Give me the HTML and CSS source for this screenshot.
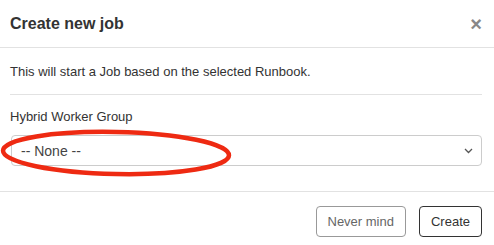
FILE: index.html
```html
<!DOCTYPE html>
<html lang="en">
<head>
    <meta charset="UTF-8">
    <meta name="viewport" content="width=device-width, initial-scale=1.0">
    <title>Create new job</title>
    <link rel="stylesheet" href="styles.css">
</head>
<body>
    <div class="modal">
        <div class="modal-header">
            <h4 class="modal-title">Create new job</h4>
            <button class="close">&times;</button>
        </div>
        <div class="modal-body">
            <p class="intro">This will start a Job based on the selected Runbook.</p>
            <hr>
            <label class="field-label">Hybrid Worker Group</label>
            <div class="select-wrap">
                <div class="select">
                    <span>-- None --</span>
                    <svg class="chevron" width="9" height="6" viewBox="0 0 9 6"><path d="M1 1l3.5 3.5L8 1" fill="none" stroke="#555" stroke-width="1.3"/></svg>
                </div>
                <svg class="annotation" width="236" height="52" viewBox="0 0 236 52">
                    <ellipse cx="116" cy="25" rx="113" ry="21" transform="rotate(1.2 116 25)" fill="none" stroke="#ee2a12" stroke-width="4.5"/>
                </svg>
            </div>
        </div>
        <div class="modal-footer">
            <button class="btn btn-muted">Never mind</button>
            <button class="btn">Create</button>
        </div>
    </div>
</body>
</html>
```

FILE: styles.css
```css
body {
    margin: 0;
    font-family: "Liberation Sans", Arial, sans-serif;
    color: #333;
    background: #fff;
}
.modal {
    width: 494px;
}
.modal-header {
    display: flex;
    align-items: center;
    justify-content: space-between;
    height: 47px;
    padding: 0 12px 0 10px;
    border-bottom: 1px solid #e2e2e2;
}
.modal-title {
    margin: 0;
    font-size: 16px;
    font-weight: bold;
    color: #333;
}
.close {
    border: none;
    background: none;
    padding: 0;
    font-size: 20px;
    font-weight: bold;
    color: #888;
    line-height: 1;
    cursor: pointer;
}
.modal-body {
    padding: 16px 12px 25px 10px;
}
.intro {
    margin: 0;
    font-size: 13px;
    line-height: 16px;
}
hr {
    border: none;
    border-top: 1px solid #e2e2e2;
    margin: 14px 0 14px 0;
}
.field-label {
    display: block;
    font-size: 13px;
    line-height: 16px;
    margin-bottom: 10px;
}
.select-wrap {
    position: relative;
}
.select {
    display: flex;
    align-items: center;
    justify-content: space-between;
    height: 29px;
    margin-left: 1px;
    padding: 0 8px 0 9px;
    border: 1px solid #ccc;
    border-radius: 4px;
    font-size: 14px;
    color: #444;
}
.annotation {
    position: absolute;
    left: -10px;
    top: -7px;
}
.modal-footer {
    display: flex;
    justify-content: flex-end;
    gap: 13px;
    padding: 14px 12px 0 0;
    border-top: 1px solid #e2e2e2;
}
.btn {
    height: 31px;
    padding: 0 11px;
    border: 1px solid #333;
    border-radius: 4px;
    background: #fff;
    font-family: "Liberation Sans", Arial, sans-serif;
    font-size: 13px;
    color: #333;
}
.btn-muted {
    border-color: #999;
    color: #666;
}
```
